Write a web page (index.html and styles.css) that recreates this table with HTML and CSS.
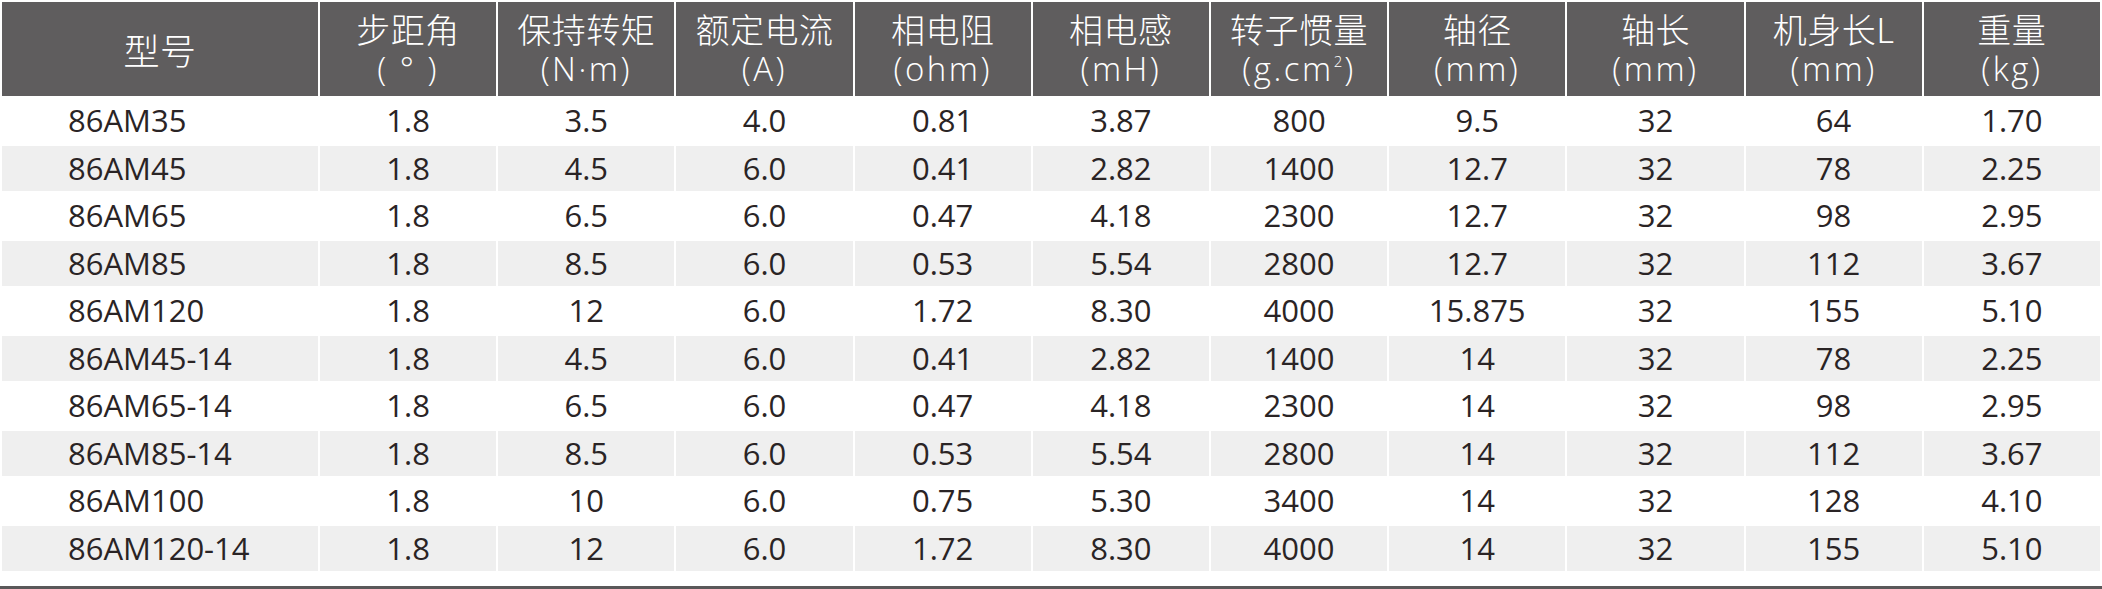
FILE: index.html
```html
<!DOCTYPE html>
<html lang="zh-CN">
<head>
<meta charset="utf-8">
<title>86AM 步进电机参数</title>
<link rel="stylesheet" href="styles.css">
</head>
<body>
<div class="page">
  <table class="spec">
    <colgroup>
      <col class="c-model">
      <col><col><col><col><col><col><col><col><col><col>
    </colgroup>
    <thead>
      <tr>
        <th class="model-h"><span class="zh">型号</span></th>
        <th><span class="zh">步距角</span><span class="unit">(&nbsp;°&nbsp;)</span></th>
        <th><span class="zh">保持转矩</span><span class="unit">(N·m)</span></th>
        <th><span class="zh">额定电流</span><span class="unit">(A)</span></th>
        <th><span class="zh">相电阻</span><span class="unit">(ohm)</span></th>
        <th><span class="zh">相电感</span><span class="unit">(mH)</span></th>
        <th><span class="zh">转子惯量</span><span class="unit">(g.cm<sup>2</sup>)</span></th>
        <th><span class="zh">轴径</span><span class="unit">(mm)</span></th>
        <th><span class="zh">轴长</span><span class="unit">(mm)</span></th>
        <th><span class="zh">机身长L</span><span class="unit">(mm)</span></th>
        <th><span class="zh">重量</span><span class="unit">(kg)</span></th>
      </tr>
    </thead>
    <tbody>
      <tr><td>86AM35</td><td>1.8</td><td>3.5</td><td>4.0</td><td>0.81</td><td>3.87</td><td>800</td><td>9.5</td><td>32</td><td>64</td><td>1.70</td></tr>
      <tr><td>86AM45</td><td>1.8</td><td>4.5</td><td>6.0</td><td>0.41</td><td>2.82</td><td>1400</td><td>12.7</td><td>32</td><td>78</td><td>2.25</td></tr>
      <tr><td>86AM65</td><td>1.8</td><td>6.5</td><td>6.0</td><td>0.47</td><td>4.18</td><td>2300</td><td>12.7</td><td>32</td><td>98</td><td>2.95</td></tr>
      <tr><td>86AM85</td><td>1.8</td><td>8.5</td><td>6.0</td><td>0.53</td><td>5.54</td><td>2800</td><td>12.7</td><td>32</td><td>112</td><td>3.67</td></tr>
      <tr><td>86AM120</td><td>1.8</td><td>12</td><td>6.0</td><td>1.72</td><td>8.30</td><td>4000</td><td>15.875</td><td>32</td><td>155</td><td>5.10</td></tr>
      <tr><td>86AM45-14</td><td>1.8</td><td>4.5</td><td>6.0</td><td>0.41</td><td>2.82</td><td>1400</td><td>14</td><td>32</td><td>78</td><td>2.25</td></tr>
      <tr><td>86AM65-14</td><td>1.8</td><td>6.5</td><td>6.0</td><td>0.47</td><td>4.18</td><td>2300</td><td>14</td><td>32</td><td>98</td><td>2.95</td></tr>
      <tr><td>86AM85-14</td><td>1.8</td><td>8.5</td><td>6.0</td><td>0.53</td><td>5.54</td><td>2800</td><td>14</td><td>32</td><td>112</td><td>3.67</td></tr>
      <tr><td>86AM100</td><td>1.8</td><td>10</td><td>6.0</td><td>0.75</td><td>5.30</td><td>3400</td><td>14</td><td>32</td><td>128</td><td>4.10</td></tr>
      <tr><td>86AM120-14</td><td>1.8</td><td>12</td><td>6.0</td><td>1.72</td><td>8.30</td><td>4000</td><td>14</td><td>32</td><td>155</td><td>5.10</td></tr>
    </tbody>
  </table>
  <div class="rule"></div>
</div>
</body>
</html>
```
FILE: styles.css
```css
html, body {
  margin: 0;
  padding: 0;
  background: #ffffff;
}

.page {
  width: 2102px;
}

.spec {
  width: 2102px;
  table-layout: fixed;
  border-collapse: separate;
  border-spacing: 2px;
  font-family: "Open Sans", "Noto Sans CJK SC", sans-serif;
  color: #2a2425;
}

.c-model {
  width: 316px;
}

.spec th {
  height: 94px;
  padding: 0;
  background: #5f5d5e;
  color: #ffffff;
  font-weight: 300;
  text-align: center;
  vertical-align: middle;
  line-height: 40px;
}

.spec th .zh {
  display: block;
  font-family: "Noto Sans CJK SC", sans-serif;
  font-weight: 300;
  font-size: 34px;
  letter-spacing: 0.5px;
}

.spec th .unit {
  display: block;
  font-size: 33px;
  font-weight: 300;
  letter-spacing: 2.5px;
}

.spec th.model-h .zh {
  font-size: 36px;
}

.spec th sup {
  font-size: 15px;
  line-height: 0;
  vertical-align: 14px;
  letter-spacing: 2px;
}

.spec td {
  height: 45.5px;
  padding: 0;
  font-size: 31px;
  line-height: 45px;
  text-align: center;
  vertical-align: middle;
  white-space: nowrap;
}

.spec td:first-child {
  text-align: left;
  padding-left: 66px;
}

.spec tbody tr:nth-child(even) td {
  background: #efefef;
}

.rule {
  margin-top: 13px;
  height: 3px;
  background: #5a5859;
}
```
